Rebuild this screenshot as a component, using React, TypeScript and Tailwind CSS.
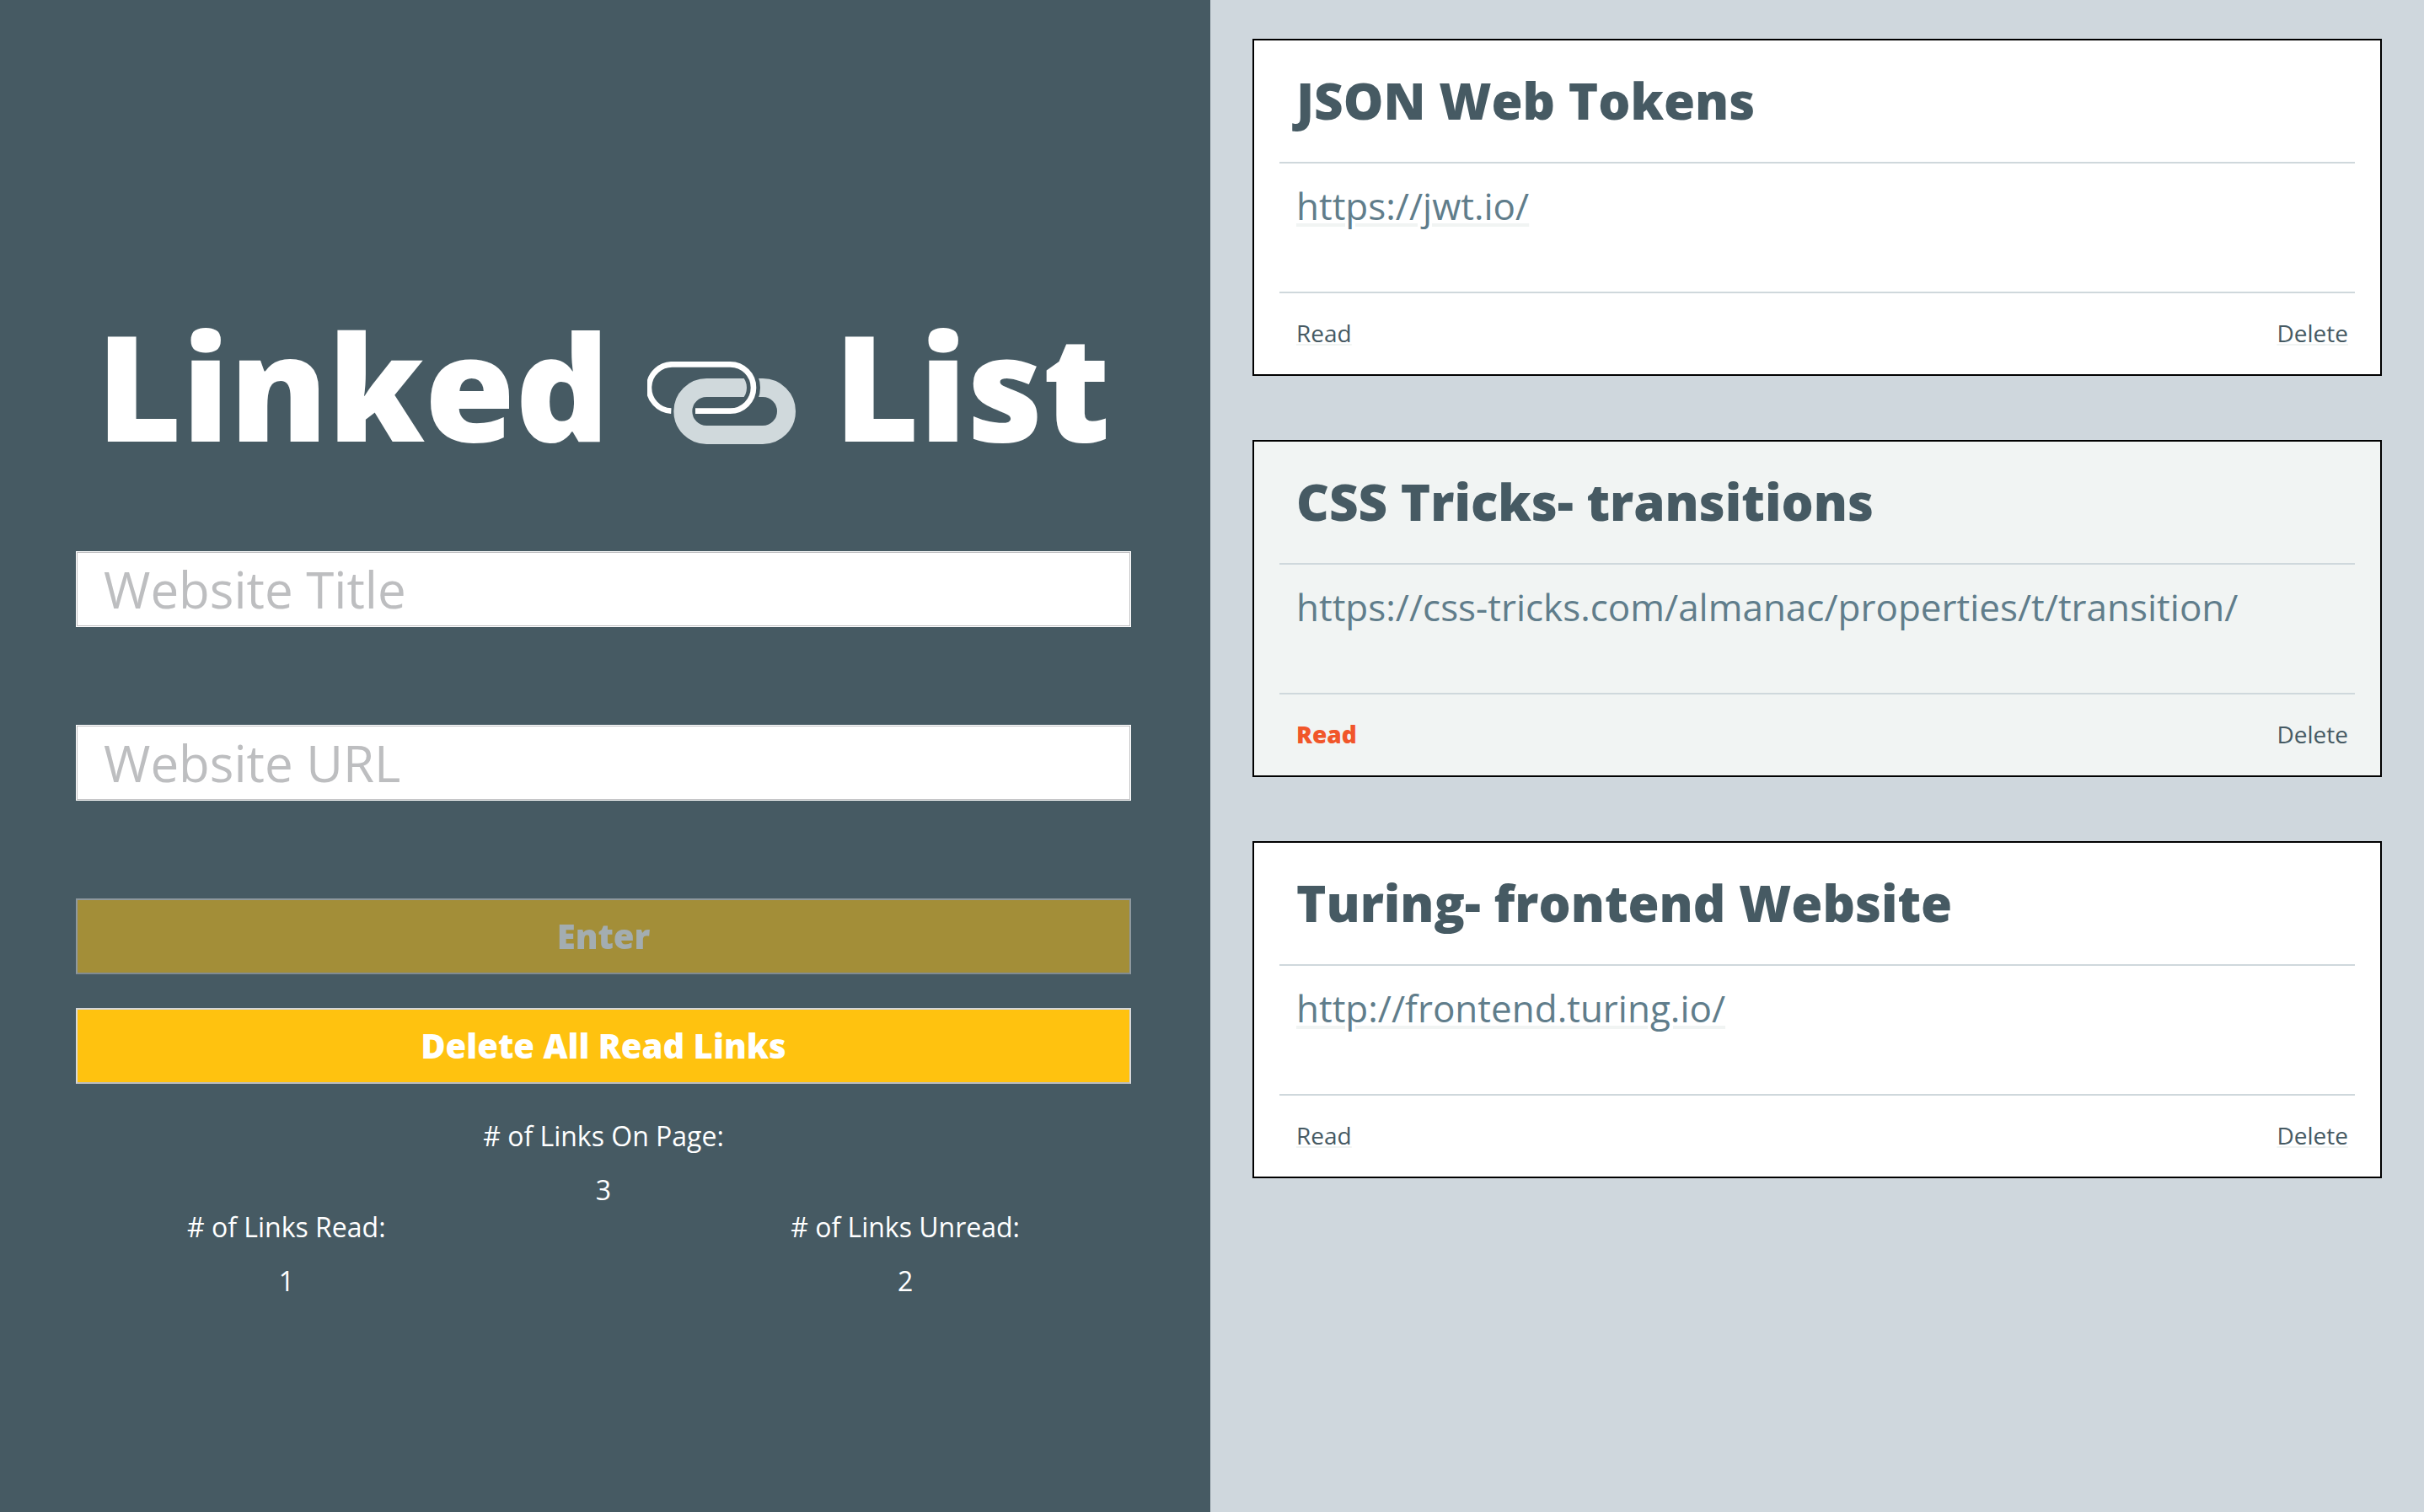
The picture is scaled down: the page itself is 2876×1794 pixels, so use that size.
import { useState } from "react";

type Link = { id: number; title: string; url: string; read: boolean };

const initialLinks: Link[] = [
  { id: 1, title: "JSON Web Tokens", url: "https://jwt.io/", read: false },
  {
    id: 2,
    title: "CSS Tricks- transitions",
    url: "https://css-tricks.com/almanac/properties/t/transition/",
    read: true,
  },
  { id: 3, title: "Turing- frontend Website", url: "http://frontend.turing.io/", read: false },
];

function ChainLogo() {
  return (
    <svg
      viewBox="78 87 528 294"
      className="inline-block h-[98px] w-[176px] align-[-3px]"
      fill="none"
      aria-hidden="true"
    >
      <mask id="overlap" maskUnits="userSpaceOnUse" x="0" y="0" width="700" height="450">
        <rect width="700" height="450" fill="white" />
        <path d="M373 97A83 83 0 0 1 373 263" stroke="black" strokeWidth="48" />
      </mask>
      <rect
        x="205"
        y="180"
        width="368"
        height="168"
        rx="84"
        stroke="#d0d9dc"
        strokeWidth="66"
        mask="url(#overlap)"
      />
      <path
        d="M249 263H373A83 83 0 0 0 373 97H171A83 83 0 0 0 163 263"
        stroke="white"
        strokeWidth="20"
      />
    </svg>
  );
}

function Field({
  label,
  value,
  onChange,
}: {
  label: string;
  value: string;
  onChange: (value: string) => void;
}) {
  return (
    <input
      type="text"
      aria-label={label}
      placeholder={label}
      value={value}
      onChange={(e) => onChange(e.target.value)}
      className="h-[90px] w-full border border-white bg-white px-8 text-[60px] leading-[82px] text-[#465a63] inset-ring inset-ring-[#bfbfc1] placeholder:text-[#bdbec0]"
    />
  );
}

function Stat({ label, value }: { label: string; value: number }) {
  return (
    <div className="flex flex-col items-center gap-5">
      <dt>{label}</dt>
      <dd>{value}</dd>
    </div>
  );
}

function LinkCard({
  link,
  onToggle,
  onDelete,
}: {
  link: Link;
  onToggle: () => void;
  onDelete: () => void;
}) {
  return (
    <article
      className={`border-2 border-black px-[30px] ${link.read ? "bg-[#f1f4f3]" : "bg-white"}`}
    >
      <h2 className="px-5 pt-[30px] pb-8 text-[60px] leading-[82px] font-extrabold text-[#465a63]">
        {link.title}
      </h2>
      <div className="border-y-2 border-[#cfd8dc] px-5 pt-5 pb-[71px] text-[44px] leading-[61px] text-[#607d8b]">
        <a
          href={link.url}
          className="underline decoration-[#f1f4f3] decoration-4 underline-offset-4"
        >
          {link.url}
        </a>
      </div>
      <div className="flex justify-between pt-7 pr-2 pb-[30px] pl-5 text-[28px] leading-[38px] text-[#465a63]">
        <button
          type="button"
          onClick={onToggle}
          className={`underline decoration-[#f1f4f3] decoration-2 underline-offset-2 ${
            link.read ? "font-extrabold text-[#f1562a]" : ""
          }`}
        >
          Read
        </button>
        <button
          type="button"
          onClick={onDelete}
          className="underline decoration-[#f1f4f3] decoration-2 underline-offset-2"
        >
          Delete
        </button>
      </div>
    </article>
  );
}

const buttonClass =
  "h-[90px] w-full border-2 border-[#d6d7d9] border-b-[#bcbdc0] bg-[#ffc20f] text-[40px] leading-[54px] font-extrabold text-white disabled:opacity-50";

export default function App() {
  const [links, setLinks] = useState(initialLinks);
  const [title, setTitle] = useState("");
  const [url, setUrl] = useState("");
  const readCount = links.filter((l) => l.read).length;

  return (
    <div className="flex min-h-screen bg-[#cfd7dd] font-['Open_Sans',sans-serif]">
      <section className="w-[1436px] shrink bg-[#465a63] pt-[370px] pr-[94px] pl-[90px] text-white">
        <h1 className="text-center text-[174px] leading-none font-extrabold whitespace-nowrap">
          Linked <ChainLogo /> List
        </h1>
        <form
          className="mt-[110px] flex flex-col"
          onSubmit={(e) => {
            e.preventDefault();
            setLinks([...links, { id: Date.now(), title, url, read: false }]);
            setTitle("");
            setUrl("");
          }}
        >
          <div className="flex flex-col gap-[116px]">
            <Field label="Website Title" value={title} onChange={setTitle} />
            <Field label="Website URL" value={url} onChange={setUrl} />
            <button type="submit" disabled={!title || !url} className={buttonClass}>
              Enter
            </button>
          </div>
          <button
            type="button"
            onClick={() => setLinks(links.filter((l) => !l.read))}
            className={`mt-10 ${buttonClass}`}
          >
            Delete All Read Links
          </button>
        </form>
        <dl className="mt-10 text-[32px] leading-[44px]">
          <Stat label="# of Links On Page:" value={links.length} />
          <div className="flex justify-between px-[132px]">
            <Stat label="# of Links Read:" value={readCount} />
            <Stat label="# of Links Unread:" value={links.length - readCount} />
          </div>
        </dl>
      </section>
      <main className="flex min-w-0 flex-1 flex-col gap-[76px] px-[50px] pt-[46px]">
        {links.map((link) => (
          <LinkCard
            key={link.id}
            link={link}
            onToggle={() =>
              setLinks(links.map((l) => (l.id === link.id ? { ...l, read: !l.read } : l)))
            }
            onDelete={() => setLinks(links.filter((l) => l.id !== link.id))}
          />
        ))}
      </main>
    </div>
  );
}
